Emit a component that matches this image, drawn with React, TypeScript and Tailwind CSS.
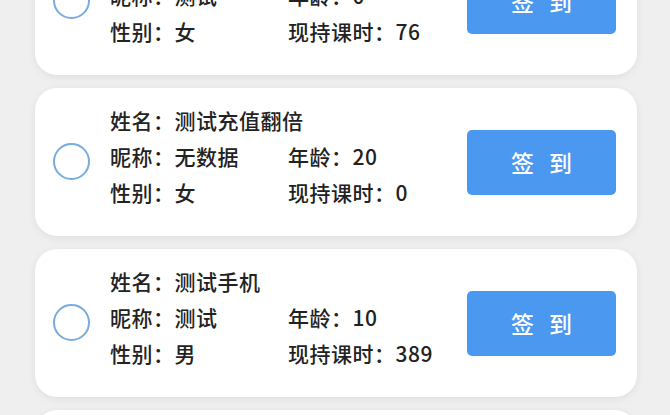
import React from 'react';

type Student = {
  name?: string;
  nickname: string;
  gender: string;
  age: number;
  hours: number;
};

const students: Student[] = [
  { name: '测试', nickname: '测试', gender: '女', age: 0, hours: 76 },
  { name: '测试充值翻倍', nickname: '无数据', gender: '女', age: 20, hours: 0 },
  { name: '测试手机', nickname: '测试', gender: '男', age: 10, hours: 389 },
  { name: '测试', nickname: '测试', gender: '女', age: 12, hours: 40 },
];

function StudentCard({ s }: { s: Student }) {
  return (
    <div className="h-[148px] shrink-0 rounded-[22px] bg-white shadow-[0_2px_8px_rgba(0,0,0,0.07)] flex items-center pl-[18px] pr-[21px]">
      <div className="w-[37px] h-[37px] rounded-full border-2 border-[#78acdc] shrink-0 -mt-[1px]" />
      <div className="ml-[20px] flex-1 text-[21px] leading-[36px] text-[#222] font-medium tracking-[0.5px] -mt-[12px]">
        <div>姓名：{s.name}</div>
        <div className="flex">
          <span className="w-[178px]">昵称：{s.nickname}</span>
          <span>年龄：{s.age}</span>
        </div>
        <div className="flex">
          <span className="w-[178px]">性别：{s.gender}</span>
          <span>现持课时：{s.hours}</span>
        </div>
      </div>
      <button className="w-[149px] h-[65px] rounded-[5px] bg-[#4b98f1] text-white text-[23px] font-medium tracking-[5px] pl-[5px] flex items-center justify-center">
        签 到
      </button>
    </div>
  );
}

export default function App() {
  return (
    <div
      className="w-[670px] h-[415px] overflow-hidden bg-[#efefef]"
      style={{ fontFamily: '"Noto Sans CJK SC", "Noto Sans", sans-serif' }}
    >
      <div className="-mt-[73px] px-[35px] pr-[33px] flex flex-col gap-[13px]">
        {students.map((s, i) => (
          <StudentCard key={i} s={s} />
        ))}
      </div>
    </div>
  );
}
